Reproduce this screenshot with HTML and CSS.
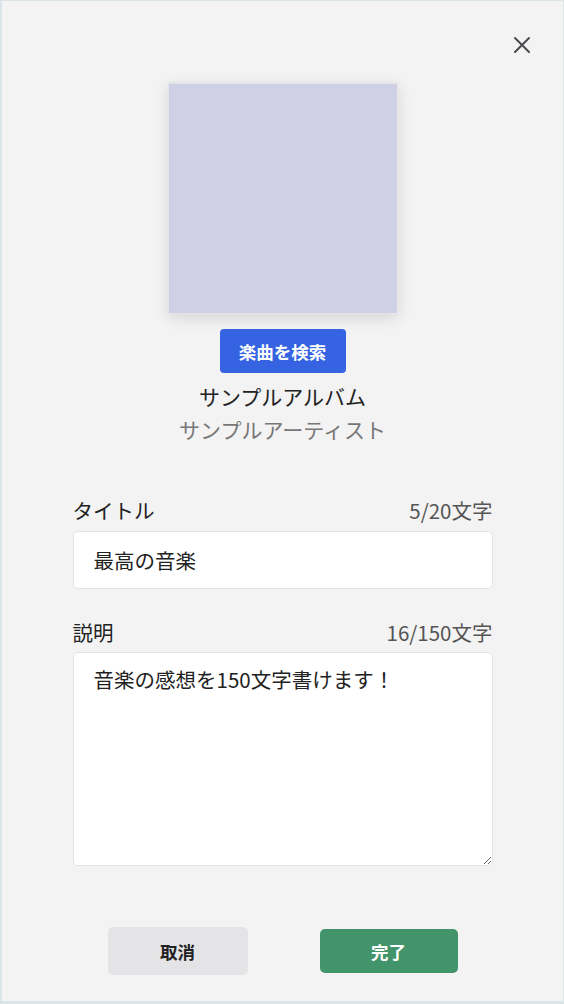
FILE: index.html
```html
<!DOCTYPE html>
<html lang="ja">
<head>
  <meta charset="UTF-8" />
  <title>レビュー編集</title>
  <link rel="stylesheet" href="styles.css">
</head>
<body>
  <div class="modal">
    <button class="close" aria-label="閉じる">
      <svg width="18" height="18" viewBox="0 0 18 18"><path d="M2 2 L16 16 M16 2 L2 16" stroke="#4a4a4f" stroke-width="2" stroke-linecap="round"/></svg>
    </button>

    <div class="album">
      <div class="cover"></div>
      <button class="search">楽曲を検索</button>
      <div class="album-name">サンプルアルバム</div>
      <div class="artist">サンプルアーティスト</div>
    </div>

    <div class="field">
      <div class="field-head">
        <span>タイトル</span>
        <span class="count">5/20文字</span>
      </div>
      <input type="text" class="title-input" value="最高の音楽">
    </div>

    <div class="field">
      <div class="field-head">
        <span>説明</span>
        <span class="count">16/150文字</span>
      </div>
      <textarea class="desc">音楽の感想を150文字書けます！</textarea>
    </div>

    <div class="actions">
      <button class="cancel">取消</button>
      <button class="done">完了</button>
    </div>
  </div>
</body>
</html>
```

FILE: styles.css
```css
body {
  margin: 0;
  background: #dbe4e7;
  font-family: "Noto Sans CJK JP", "Noto Sans", sans-serif;
  color: #222;
}
.modal {
  position: relative;
  box-sizing: border-box;
  margin: 1px 1px 0 2px;
  height: 1000px;
  background: #f3f3f3;
  display: flex;
  flex-direction: column;
  align-items: center;
}
.close {
  position: absolute;
  top: 33px;
  right: 30px;
  width: 22px;
  height: 22px;
  padding: 2px;
  border: none;
  background: none;
  cursor: pointer;
}
.album {
  display: flex;
  flex-direction: column;
  align-items: center;
  margin-top: 81px;
}
.cover {
  width: 228px;
  height: 229px;
  background: #cfcfe6;
  border: 1px solid #e6e6ea;
  border-top-width: 2px;
  box-shadow: 0 4px 14px rgba(0,0,0,0.12);
}
.search {
  margin-top: 15px;
  width: 126px;
  height: 44px;
  border: none;
  border-radius: 4px;
  background: #3563e2;
  color: white;
  font-family: inherit;
  font-size: 17.5px;
  font-weight: bold;
}
.album-name {
  margin-top: 7px;
  font-size: 21px;
  line-height: 33px;
  color: #222;
}
.artist {
  font-size: 21px;
  line-height: 33px;
  color: #777;
}
.field {
  width: 420px;
}
.field-head {
  display: flex;
  justify-content: space-between;
  font-size: 20.5px;
  line-height: 24px;
  margin-top: 52px;
  margin-bottom: 9px;
}
.field + .field .field-head {
  margin-top: 31px;
  margin-bottom: 8px;
}
.count {
  color: #555;
}
.title-input, .desc {
  display: block;
  box-sizing: border-box;
  width: 420px;
  border: 1px solid #e4e4e4;
  border-radius: 5px;
  background: white;
  font-family: inherit;
  font-size: 20.5px;
  color: #222;
  padding: 0 20px;
}
.title-input {
  height: 58px;
}
.desc {
  height: 214px;
  padding-top: 11px;
  line-height: 30px;
  resize: vertical;
}
.actions {
  display: flex;
  align-items: center;
  gap: 72px;
  margin-top: 61px;
}
.actions button {
  border: none;
  border-radius: 5px;
  font-family: inherit;
  font-size: 17.5px;
  font-weight: bold;
  cursor: pointer;
}
.cancel {
  width: 140px;
  height: 48px;
  background: #e4e4e6;
  color: #222;
}
.done {
  width: 138px;
  height: 44px;
  background: #42946b;
  color: white;
}
```
